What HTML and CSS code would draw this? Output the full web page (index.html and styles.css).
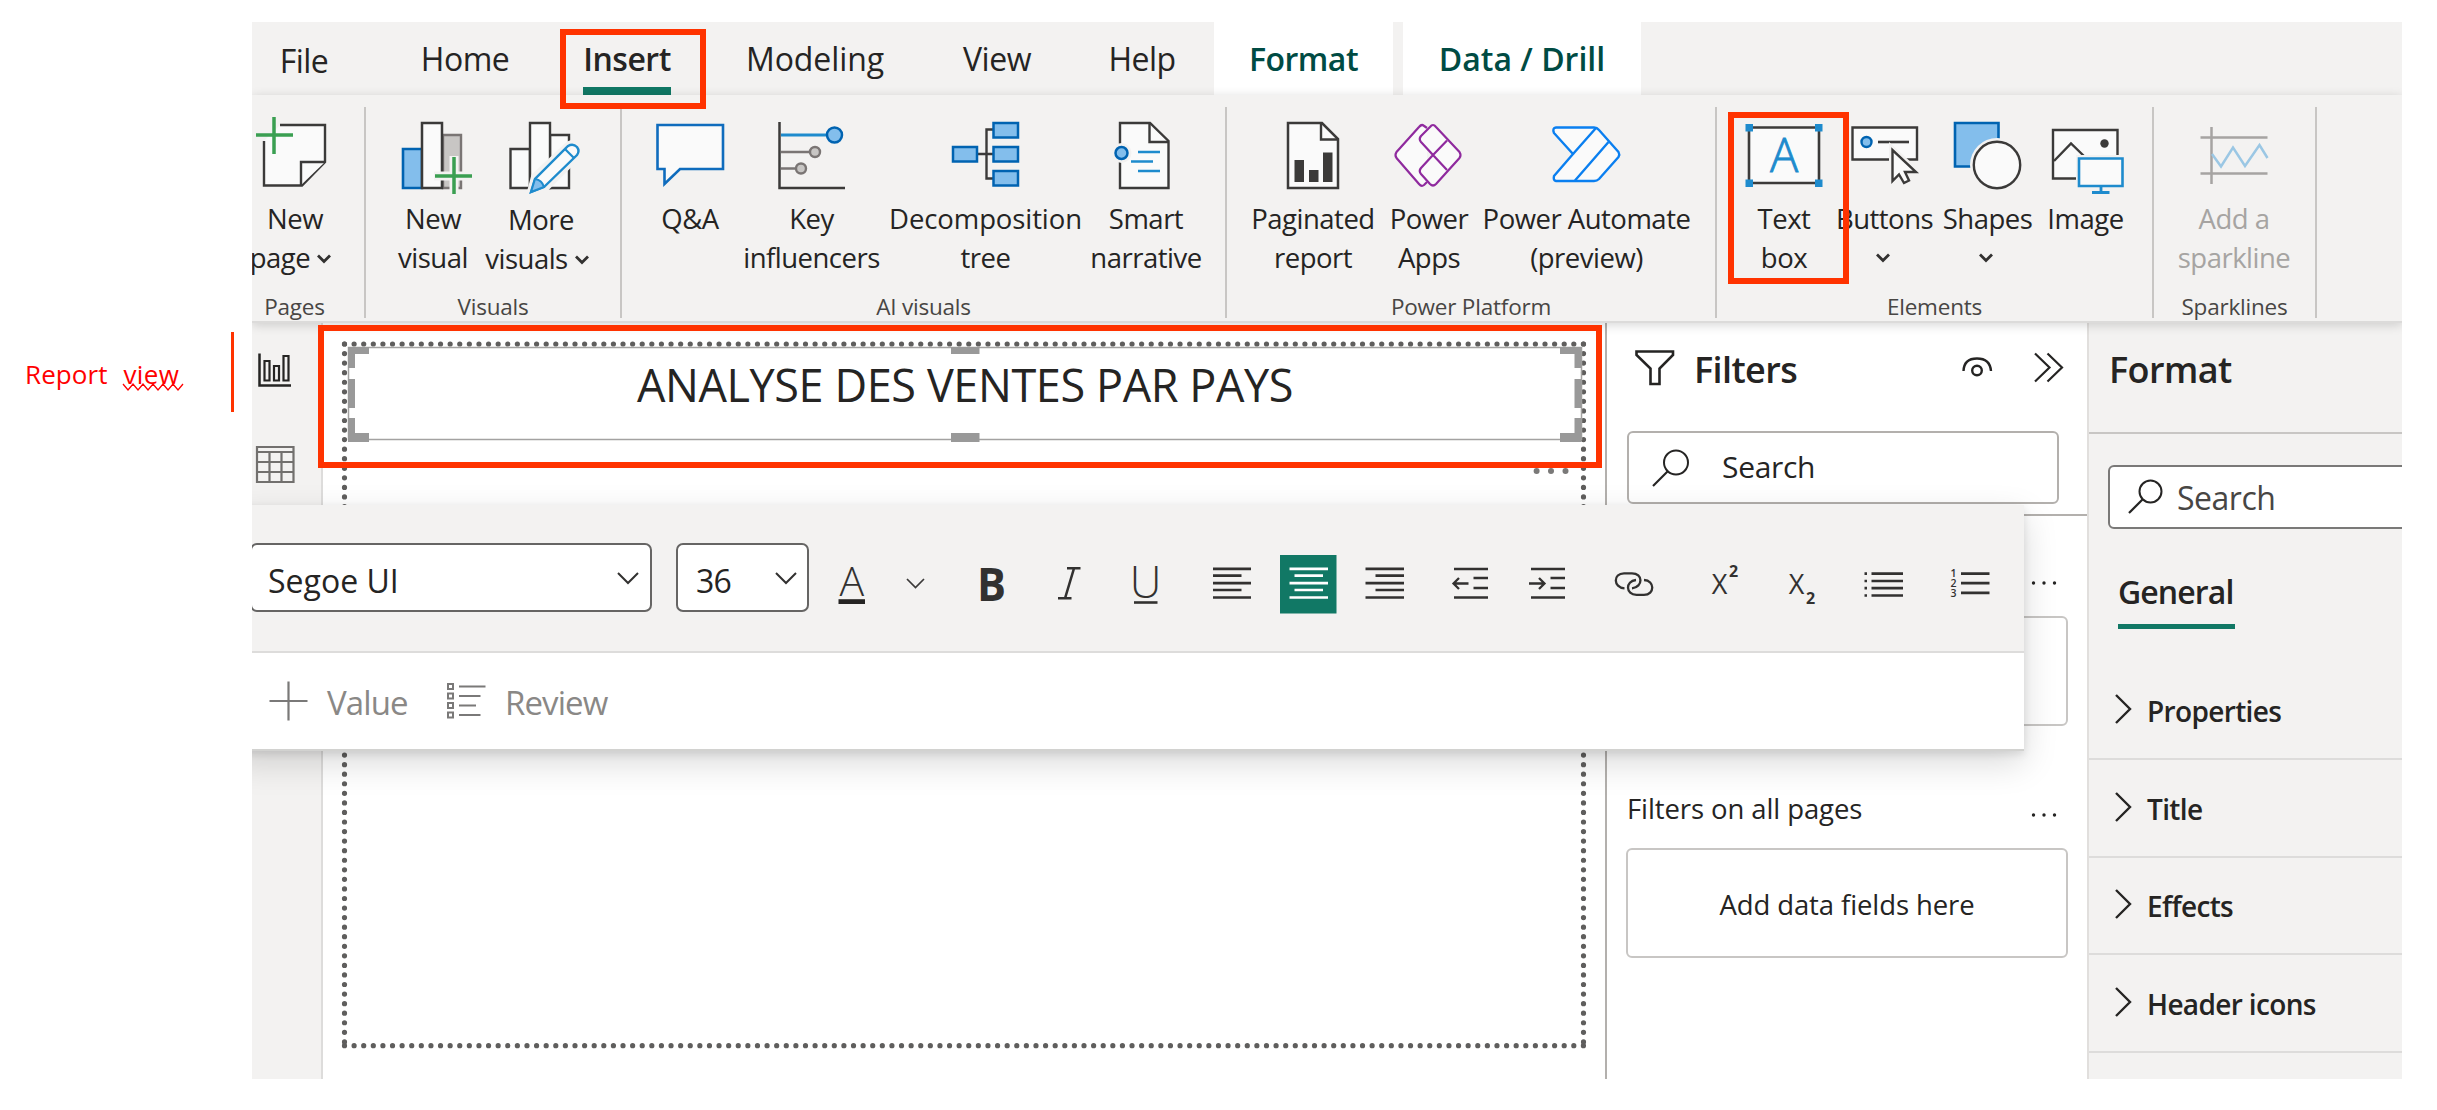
FILE: index.html
```html
<!DOCTYPE html>
<html lang="en">
<head>
<meta charset="utf-8">
<title>Report editor</title>
<link rel="stylesheet" href="styles.css">
</head>
<body>
<div class="page">
<aside class="note">
  <span class="note-text">Report&nbsp; <span class="note-word">view</span></span>
  <svg class="squiggle" width="62" height="8" viewBox="0 0 62 8"><path d="M1 1l5 6 5-6 5 6 5-6 5 6 5-6 5 6 5-6 5 6 5-6 5 6 5-6" fill="none" stroke="#f00" stroke-width="1.300"/></svg>
  <span class="note-bar"></span>
</aside>

<div class="app">
  <nav class="tabs">
    <span class="tab t-file">File</span>
    <span class="tab t-home">Home</span>
    <span class="tab t-insert">Insert</span>
    <span class="tab t-model">Modeling</span>
    <span class="tab t-view">View</span>
    <span class="tab t-help">Help</span>
    <span class="ctx c-format">Format</span>
    <span class="ctx c-drill">Data / Drill</span>
  </nav>

  <section class="ribbon">
    <div class="group g-pages">
      <div class="items">
        <div class="item"><svg width="86" height="84" viewBox="252 114 86 84"><path d="M280 125H325V162L302 185.500H264V141" fill="#fafafa" stroke="#3b3a39" stroke-width="2.400"/><path d="M301 185V162H325" fill="#fafafa" stroke="#3b3a39" stroke-width="2.400"/><path d="M256 135H293M274 117V154" stroke="#3a9f51" stroke-width="3.500"/></svg>
        <span>New</span><span class="pg">page<svg class="chev" width="14" height="10" viewBox="0 0 14 10"><path d="M1 1.500l6 6 6-6"/></svg></span></div>
      </div>
      <div class="label">Pages</div>
    </div>
    <div class="group g-visuals">
      <div class="items">
        <div class="item"><svg width="98" height="84" viewBox="384 114 98 84"><path d="M403 149H422V188H403Z" fill="#83beec" stroke="#0063b1" stroke-width="2.600"/><path d="M443 135H461V188H443Z" fill="#c8c6c4" stroke="#7a7574" stroke-width="2.400"/><path d="M422 123H442V188H422Z" fill="#fafafa" stroke="#3b3a39" stroke-width="2.500"/><path d="M434 176H474M454 156V196" stroke="#f3f2f1" stroke-width="9"/><path d="M435 176H472M454 157V194" stroke="#3a9f51" stroke-width="3.500"/></svg>
        <span>New</span><span>visual</span></div>
        <div class="item"><svg width="114" height="84" viewBox="483 114 114 84"><g fill="#fafafa" stroke="#3b3a39" stroke-width="2.400"><path d="M551 135H570V188H551Z"/><path d="M511.500 149H531V188H511.500Z"/><path d="M531 123H551V188H531Z"/></g><path d="M532 192L536 177 570 145Q576 142 579 147 582 152 578 156L546 188Z" fill="#fafafa" stroke="#f3f2f1" stroke-width="8"/><path d="M532 192L536 179 569 146Q574 143 578 147 581 151 578 155L545 187Z" fill="#fafafa" stroke="#1e8bcd" stroke-width="2.400"/><path d="M532 192L536 179Q543 180 545 187Z" fill="#83beec" stroke="#1e8bcd" stroke-width="2"/><path d="M566 149L575 158" stroke="#1e8bcd" stroke-width="2.200"/></svg>
        <span class="mo">More</span><span class="mv">visuals<svg class="chev" width="14" height="10" viewBox="0 0 14 10"><path d="M1 1.500l6 6 6-6"/></svg></span></div>
      </div>
      <div class="label">Visuals</div>
    </div>
    <div class="group g-ai">
      <div class="items">
        <div class="item"><svg width="108" height="84" viewBox="636 114 108 84"><path d="M657.500 125H723V169H680L664.500 184V169H657.500Z" fill="#fafafa" stroke="#0f6cbd" stroke-width="2.600"/></svg>
        <span>Q&amp;A</span></div>
        <div class="item"><svg width="135" height="84" viewBox="744 114 135 84"><path d="M779.500 122V188H845" fill="none" stroke="#3b3a39" stroke-width="2.500"/><path d="M781 135H827" stroke="#1e8bcd" stroke-width="2.800"/><path d="M781 152H810M781 168.500H796" stroke="#7a7574" stroke-width="2.500"/><circle cx="834.500" cy="135" r="7.500" fill="#83beec" stroke="#0063b1" stroke-width="2.500"/><circle cx="815" cy="152" r="5" fill="#c8c6c4" stroke="#7a7574" stroke-width="2.400"/><circle cx="801" cy="168.500" r="5" fill="#c8c6c4" stroke="#7a7574" stroke-width="2.400"/></svg>
        <span>Key</span><span>influencers</span></div>
        <div class="item"><svg width="213" height="84" viewBox="879 114 213 84"><path d="M977 154H993M993 129.500H986.500V178.500H993" fill="none" stroke="#3b3a39" stroke-width="2.400"/><g fill="#83beec" stroke="#0063b1" stroke-width="2.500"><path d="M953 147H977V161.500H953Z"/><path d="M993.500 123H1018V137.500H993.500Z"/><path d="M993.500 147H1018V161.500H993.500Z"/><path d="M993.500 171H1018V185.500H993.500Z"/></g></svg>
        <span class="wide">Decomposition</span><span>tree</span></div>
        <div class="item"><svg width="108" height="84" viewBox="1092 114 108 84"><path d="M1120 123H1150L1168.500 141V188H1120Z" fill="#fafafa" stroke="#3b3a39" stroke-width="2.400"/><path d="M1149.500 123V142H1168" fill="none" stroke="#3b3a39" stroke-width="2.400"/><circle cx="1121.500" cy="153" r="10" fill="#f3f2f1"/><circle cx="1121.500" cy="153" r="6" fill="#83beec" stroke="#0063b1" stroke-width="2.500"/><path d="M1138 152H1160M1131 161.500H1153M1138 171H1160" stroke="#1e8bcd" stroke-width="2.600"/></svg>
        <span>Smart</span><span>narrative</span></div>
      </div>
      <div class="label">AI visuals</div>
    </div>
    <div class="group g-power">
      <div class="items">
        <div class="item"><svg width="130" height="84" viewBox="1248 114 130 84"><path d="M1288 123H1322L1338 139V188H1288Z" fill="#fafafa" stroke="#3b3a39" stroke-width="2.500"/><path d="M1321 123V139.500H1338" fill="none" stroke="#3b3a39" stroke-width="2.400"/><path d="M1294.500 160H1304V182H1294.500ZM1309 170H1318.500V182H1309ZM1323 152.500H1332.500V182H1323Z" fill="#3b3a39"/></svg>
        <span>Paginated</span><span>report</span></div>
        <div class="item"><svg width="102" height="84" viewBox="1378 114 102 84"><g fill="#fafafa" stroke="#8f2a9e" stroke-width="2.200" stroke-linejoin="round"><path d="M1427 128L1423.500 125.500Q1421.500 124 1419 127L1396.500 152Q1394.500 155 1396.500 158L1419 184Q1421.500 187 1424 185L1427 182"/><path d="M1430 127Q1433 123 1436 127L1459.500 152Q1461.500 155 1459.500 158L1436 184Q1433 187 1430 184L1421 174Q1418.500 171 1421 168L1433 155 1421 142Q1418.500 139 1421 136Z"/><path d="M1433 155L1447 140.500M1433 155L1447 170" /></g></svg>
        <span>Power</span><span>Apps</span></div>
        <div class="item"><svg width="213" height="84" viewBox="1480 114 213 84"><g fill="#fafafa" stroke="#0a7ff0" stroke-width="2.400" stroke-linejoin="round"><path d="M1556 127.500H1594Q1597 127.500 1599 130L1618.500 152Q1620 154.500 1618.500 157L1599 179Q1597 181 1594 181H1556Q1553 180.500 1554 176L1573 154 1554 133Q1552 128 1556 127.500Z"/><path d="M1573 154L1596 128M1575 180.500L1608.500 142" fill="none"/></g></svg>
        <span>Power Automate</span><span>(preview)</span></div>
      </div>
      <div class="label">Power Platform</div>
    </div>
    <div class="group g-elements">
      <div class="items">
        <div class="item"><svg width="98" height="84" viewBox="1735 114 98 84"><path d="M1749 127.500H1819V183H1749Z" fill="#fafafa" stroke="#3b3a39" stroke-width="2.600"/><path d="M1745.500 124H1753V131.500H1745.500ZM1815 124H1822.500V131.500H1815ZM1745.500 179.500H1753V187H1745.500ZM1815 179.500H1822.500V187H1815Z" fill="#1e8bcd"/><text x="1784" y="172" text-anchor="middle" class="glyph-a" fill="#1e8bcd">A</text></svg>
        <span>Text</span><span>box</span></div>
        <div class="item"><svg width="103" height="84" viewBox="1833 114 103 84"><path d="M1852.500 127.500H1917V159.500H1852.500Z" fill="#fafafa" stroke="#3b3a39" stroke-width="2.400"/><circle cx="1866.500" cy="142" r="5" fill="#83beec" stroke="#0063b1" stroke-width="2.400"/><path d="M1878 142H1909" stroke="#3b3a39" stroke-width="2.600"/><path d="M1892.500 150V181L1899 174.500 1904 183 1909 180.500 1905 172.500H1917Z" fill="#fafafa" stroke="#f3f2f1" stroke-width="7"/><path d="M1892.500 150V181L1899 174.500 1904 183 1909 180.500 1905 172H1916Z" fill="#fafafa" stroke="#3b3a39" stroke-width="2.400"/></svg>
        <span>Buttons</span><span><svg class="chev solo" width="14" height="10" viewBox="0 0 14 10"><path d="M1 1.500l6 6 6-6"/></svg></span></div>
        <div class="item"><svg width="103" height="84" viewBox="1936 114 103 84"><path d="M1955 123H1998.500V166.500H1955Z" fill="#83beec" stroke="#0063b1" stroke-width="2.600"/><circle cx="1997" cy="165" r="27" fill="#f3f2f1"/><circle cx="1997" cy="165" r="23.200" fill="#fafafa" stroke="#3b3a39" stroke-width="2.400"/></svg>
        <span>Shapes</span><span><svg class="chev solo" width="14" height="10" viewBox="0 0 14 10"><path d="M1 1.500l6 6 6-6"/></svg></span></div>
        <div class="item"><svg width="93" height="84" viewBox="2039 114 93 84"><path d="M2053 130H2117.500V178.500H2053Z" fill="#fafafa" stroke="#3b3a39" stroke-width="2.400"/><path d="M2054 161L2071 143.500 2086 158" fill="none" stroke="#3b3a39" stroke-width="2.400"/><circle cx="2104.500" cy="143.500" r="4.200" fill="#3b3a39"/><path d="M2076 155H2128V190H2076Z" fill="#f3f2f1"/><path d="M2079 158.500H2122.500V186H2079Z" fill="#fafafa" stroke="#1e8bcd" stroke-width="2.600"/><path d="M2101 186V192M2092 192.500H2109.500" stroke="#1e8bcd" stroke-width="2.800"/></svg>
        <span>Image</span></div>
      </div>
      <div class="label">Elements</div>
    </div>
    <div class="group g-spark">
      <div class="items">
        <div class="item off"><svg width="148" height="84" viewBox="2160 114 148 84"><path d="M2200.500 137.500H2267.500M2200.500 173.500H2267.500M2211.500 127V184" stroke="#a6a4a2" stroke-width="2.500"/><path d="M2212 154L2221 166.500 2233 147.500 2245 166 2259.500 145 2267.500 158" fill="none" stroke="#9bc7e4" stroke-width="2.500"/></svg>
        <span>Add a</span><span>sparkline</span></div>
      </div>
      <div class="label">Sparklines</div>
    </div>
  </section>

  <main class="work">
    <div class="rail">
      <svg width="40" height="40" viewBox="254 351 40 40"><path d="M259.500 353.500V385.500H291" fill="none" stroke="#252423" stroke-width="2.500"/><path d="M264.500 361H269.500V380.500H264.500ZM274 366H279V380.500H274ZM283.500 356H288.500V380.500H283.500Z" fill="none" stroke="#252423" stroke-width="2.200"/></svg>
      <svg class="table-icon" width="42" height="42" viewBox="254 444 42 42"><path d="M257 447H293.500V482H257ZM257 452H293.500M257 462H293.500M257 472H293.500M269.500 452V482M281.500 452V482" fill="none" stroke="#72706e" stroke-width="2.200"/></svg>
    </div>
    <div class="canvas">
      <div class="sheet">
        <svg class="dots" width="1246" height="709" viewBox="341 340 1246 709"><g fill="none" stroke="#5f5e5d" stroke-width="5.200" stroke-linecap="round"><path d="M344.500 344H1583.500" stroke-dasharray="0 9.604"/><path d="M344.500 1045.700H1583.500" stroke-dasharray="0 9.604"/><path d="M344.500 344V1045" stroke-dasharray="0 9.560"/><path d="M1583.500 344V1045" stroke-dasharray="0 9.560"/></g></svg>
        <div class="textbox">ANALYSE DES VENTES PAR PAYS
          <svg class="handles" width="1236" height="98" viewBox="347 346 1236 98"><path d="M348.500 347.500H1581.500V439.500H348.500Z" fill="none" stroke="#a3a2a1" stroke-width="1.500"/><path d="M348 347H369V354H355V368H348ZM348 379H355V408H348ZM348 418H355V433H369V442H348ZM951 347H979.500V354H951ZM951 433H979.500V442H951ZM1560 347H1581.500V368H1574.500V354H1560ZM1574.500 379H1581.500V408H1574.500ZM1574.500 418H1581.500V442H1560V433H1574.500Z" fill="#999"/></svg>
        </div>
        <svg class="more" width="36" height="8" viewBox="0 0 36 8"><g fill="#7a7978"><circle cx="3.600" cy="4" r="3"/><circle cx="18" cy="4" r="3"/><circle cx="32.500" cy="4" r="3"/></g></svg>
      </div>
    </div>
    <div class="filters">
      <div class="f-head">
        <svg width="44" height="40" viewBox="1633 349 44 40"><path d="M1636.500 352.500H1673V356L1659.500 369.500V385H1650.500V369.500L1636.500 356Z" fill="none" stroke="#252423" stroke-width="2.600"/></svg>
        <h2>Filters</h2>
        <svg class="eye" width="34" height="24" viewBox="1960 354 34 24"><path d="M1963.500 371Q1964 358.500 1977 358.500 1990 358.500 1991 371" fill="none" stroke="#252423" stroke-width="2.400"/><circle cx="1977" cy="370.500" r="4.800" fill="none" stroke="#252423" stroke-width="2.400"/></svg>
        <svg class="dbl" width="32" height="32" viewBox="2033 353 32 32"><path d="M2035 354.500L2049.500 368.500 2035 382.500M2047.500 354.500L2062 368.500 2047.500 382.500" fill="none" stroke="#252423" stroke-width="2.200"/></svg>
      </div>
      <div class="search f-search"><svg width="40" height="40" viewBox="1650 447 40 40"><circle cx="1676" cy="461.500" r="12" fill="none" stroke="#252423" stroke-width="2"/><path d="M1667.500 470.500L1653 485" stroke="#252423" stroke-width="2.200"/></svg><span>Search</span></div>
      <div class="f-rule"></div>
      <div class="f-row first"><span></span><svg width="26" height="6" viewBox="0 0 26 6"><g fill="#252423"><circle cx="2.500" cy="3" r="1.700"/><circle cx="13" cy="3" r="1.700"/><circle cx="23.500" cy="3" r="1.700"/></g></svg></div>
      <div class="drop"></div>
      <div class="f-row second"><span>Filters on all pages</span><svg width="26" height="6" viewBox="0 0 26 6"><g fill="#252423"><circle cx="2.500" cy="3" r="1.700"/><circle cx="13" cy="3" r="1.700"/><circle cx="23.500" cy="3" r="1.700"/></g></svg></div>
      <div class="drop">Add data fields here</div>
    </div>
    <div class="format">
      <div class="p-head"><h2>Format</h2></div>
      <div class="search p-search"><svg width="38" height="38" viewBox="2126 477 38 38"><circle cx="2149.500" cy="490.500" r="11" fill="none" stroke="#252423" stroke-width="2"/><path d="M2141.500 498.500L2128 512" stroke="#252423" stroke-width="2.200"/></svg><span>Search</span></div>
      <div class="p-tab"><span>General</span></div>
      <div class="card"><svg width="20" height="32" viewBox="0 0 20 32"><path d="M2 2l14 14-14 14"/></svg><span>Properties</span></div>
      <div class="card"><svg width="20" height="32" viewBox="0 0 20 32"><path d="M2 2l14 14-14 14"/></svg><span>Title</span></div>
      <div class="card"><svg width="20" height="32" viewBox="0 0 20 32"><path d="M2 2l14 14-14 14"/></svg><span>Effects</span></div>
      <div class="card"><svg width="20" height="32" viewBox="0 0 20 32"><path d="M2 2l14 14-14 14"/></svg><span>Header icons</span></div>
    </div>
  </main>

  <div class="bar">
    <div class="bar-top">
      <div class="select s-font"><span>Segoe UI</span><svg width="22" height="14" viewBox="0 0 22 14"><path d="M1 2l10 10 10-10"/></svg></div>
      <div class="select s-size"><span>36</span><svg width="22" height="14" viewBox="0 0 22 14"><path d="M1 2l10 10 10-10"/></svg></div>
      <svg width="55" height="76" viewBox="825 546 55 76"><text x="851.700" y="596" text-anchor="middle" class="glyph-fa">A</text><path d="M838.500 599.200H865V604H838.500Z" fill="#252423"/></svg>
      <svg width="70" height="76" viewBox="880 546 70 76"><path d="M907 579L915.500 587.500 924 579" fill="none" stroke="#3b3a39" stroke-width="1.700"/></svg>
      <svg width="84" height="76" viewBox="950 546 84 76"><text x="991.500" y="600.500" text-anchor="middle" textLength="29" lengthAdjust="spacingAndGlyphs" class="glyph-b">B</text></svg>
      <svg width="71" height="76" viewBox="1034 546 71 76"><path d="M1067 568.300H1080.500M1058 598.300H1071.500M1074 568.300L1065 598.300" fill="none" stroke="#323130" stroke-width="2.500"/></svg>
      <svg width="81" height="76" viewBox="1105 546 81 76"><text x="1145.500" y="597.500" text-anchor="middle" class="glyph-u">U</text><path d="M1134 602.500H1157.500" stroke="#323130" stroke-width="2.600"/></svg>
      <svg width="94" height="76" viewBox="1186 546 94 76"><path class="ln" d="M1213 568.800H1251M1213 575.700H1241.500M1213 583.200H1251M1213 590H1241.500M1213 597.500H1251"/></svg>
      <svg class="on" width="57" height="76" viewBox="1280 546 57 76"><path d="M1280 555H1336.500V613.500H1280Z" fill="#117865"/><path class="ln" d="M1289.500 568.800H1328M1294.500 575.700H1323M1289.500 583.200H1328M1294.500 590H1323M1289.500 597.500H1328"/></svg>
      <svg width="93" height="76" viewBox="1337 546 93 76"><path class="ln" d="M1365.500 568.800H1404M1375.500 575.700H1404M1365.500 583.200H1404M1375.500 590H1404M1365.500 597.500H1404"/></svg>
      <svg width="78" height="76" viewBox="1430 546 78 76"><path class="ln" d="M1454 569H1488M1473.500 578H1488M1473.500 588H1488M1454 597.500H1488"/><path class="ar" d="M1468.500 583.500H1453.500M1459 578L1453.500 583.500 1459 589"/></svg>
      <svg width="82" height="76" viewBox="1508 546 82 76"><path class="ln" d="M1531 569H1565M1550.500 578H1565M1550.500 588H1565M1531 597.500H1565"/><path class="ar" d="M1529 583.500H1544.500M1539 578L1544.500 583.500 1539 589"/></svg>
      <svg width="90" height="76" viewBox="1590 546 90 76"><path class="ar" d="M1624.500 588.300C1613 587.500 1613 573.300 1624 573.300H1632C1643 573.300 1643.500 587 1632 588.300"/><path class="ar" d="M1644 580C1655 580.500 1655 594.800 1644 594.800H1636.500C1625.500 594.800 1625 581 1636 580"/></svg>
      <svg width="85" height="76" viewBox="1680 546 85 76"><text x="1719.500" y="594" text-anchor="middle" class="glyph-x">X</text><text x="1733.700" y="577.300" text-anchor="middle" class="glyph-2">2</text></svg>
      <svg width="75" height="76" viewBox="1765 546 75 76"><text x="1796.500" y="594" text-anchor="middle" class="glyph-x">X</text><text x="1810.500" y="603.800" text-anchor="middle" class="glyph-2">2</text></svg>
      <svg width="85" height="76" viewBox="1840 546 85 76"><path class="ln" d="M1871.500 573.700H1903M1871.500 581H1903M1871.500 588.200H1903M1871.500 595.500H1903M1864.500 573.700H1867M1864.500 581H1867M1864.500 588.200H1867M1864.500 595.500H1867"/></svg>
      <svg width="85" height="76" viewBox="1925 546 85 76"><path class="ln" d="M1961 573.700H1989.500M1961 583.200H1989.500M1961 592.800H1989.500"/><g class="glyph-n" text-anchor="middle"><text x="1953.500" y="577">1</text><text x="1953.500" y="587">2</text><text x="1953.500" y="596.500">3</text></g></svg>
    </div>
    <div class="bar-bottom">
      <svg width="40" height="40" viewBox="0 0 40 40"><path d="M.5 20H38.500M19.500 .5V39.500" stroke="#7a7978" stroke-width="2.200"/></svg>
      <span class="b-value">Value</span>
      <svg width="40" height="38" viewBox="446 681 40 38"><path d="M448 683H453V688H448ZM448 692.500H453V697.500H448ZM448 702H453V707H448ZM448 711.500H453V716.500H448Z" fill="none" stroke="#7a7978" stroke-width="2"/><path d="M459 685.500H485.500M459 695H480.500M459 704.500H476M459 714H480.500" stroke="#7a7978" stroke-width="2.200"/></svg>
      <span class="b-review">Review</span>
    </div>
  </div>
</div>

<div class="mark m-insert"></div>
<div class="mark m-textbox"></div>
<div class="mark m-title"></div>
</div>
</body>
</html>
```
FILE: styles.css
```css
* { box-sizing: border-box; }
body { margin: 0; background: #fff; }
.page {
  position: relative; display: flex; width: 2437px; height: 1110px; overflow: hidden;
  font-family: "Open Sans", "Noto Sans", sans-serif; color: #252423; background: #fff;
}
svg { display: block; flex: none; }
h2 { margin: 0; font-weight: 600; font-size: 36px; line-height: 50px; letter-spacing: -.6px; }

/* side note */
.note { position: relative; width: 252px; padding: 356px 0 0 25px; }
.note-text { display: block; font-size: 26px; line-height: 36px; color: #f00; white-space: nowrap; letter-spacing: .1px; }
.note-word { margin-left: 2px; letter-spacing: .4px; }
.squiggle { position: absolute; left: 122px; top: 383px; }
.note-bar { position: absolute; left: 231px; top: 332px; width: 3px; height: 80px; background: #f30; }

.app {
  position: relative; display: flex; flex-direction: column; width: 2150px; height: 1057px;
  margin-top: 22px; overflow: hidden; background: #f3f2f1;
}

/* tabs */
.tabs { display: flex; height: 73px; line-height: 73px; font-size: 32px; letter-spacing: -.5px; white-space: nowrap; }
.tab { display: flex; justify-content: center; }
.t-file { width: 50px; margin-left: 27px; padding-top: 2px; }
.t-home { width: 90px; margin-left: 91px; }
.t-insert { width: 88px; margin-left: 73px; font-weight: 600; letter-spacing: -.5px; border-bottom: 8px solid #117865; }
.t-model { width: 140px; margin-left: 74px; letter-spacing: -.1px; }
.t-view { width: 72px; margin-left: 76px; }
.t-help { width: 70px; margin-left: 74px; }
.ctx { background: #fff; color: #004b43; font-weight: 600; text-align: center; }
.c-format { width: 179px; margin-left: 37px; letter-spacing: -.5px; }
.c-drill { width: 238px; margin-left: 10px; letter-spacing: 0; }

/* ribbon */
.ribbon { position: relative; z-index: 2; display: flex; height: 228px; padding-top: 12px; background: #f3f2f1; border-bottom: 2px solid #dcdbda; box-shadow: 0 2px 10px rgba(0,0,0,.16); }
.group { display: flex; flex-direction: column; height: 211px; border-right: 2px solid #c8c6c4; }
.items { display: flex; flex: none; height: 184px; padding-top: 7px; }
.item { display: flex; flex-direction: column; align-items: center; font-size: 27.500px; letter-spacing: -.5px; }
.item > span { display: flex; align-items: center; height: 39px; line-height: 39px; white-space: nowrap; }
.item > svg + span { margin-top: 1px; }
.item > svg + .mo { margin: 2px 0 0 4px; }
.item .pg { margin-left: -9px; }
.item .mv { margin-left: -4px; }
.item .wide { letter-spacing: -.1px; }
.off { color: #a6a4a2; }
.chev { margin: 3px 0 0 7px; fill: none; stroke: #323130; stroke-width: 2.800; }
.chev.solo { margin: 1px 3px 0 0; }
.label { flex: none; height: 30px; margin-top: 1px; line-height: 30px; font-size: 22.500px; letter-spacing: -.2px; text-align: center; color: #484644; white-space: nowrap; }
.g-pages { width: 141px; margin-left: -27px; }
.g-pages .items { padding-left: 27px; }
.g-pages .item { width: 86px; }
.g-visuals { width: 256px; }
.g-visuals .items { padding-left: 18px; }
.g-visuals .item:nth-child(1) { width: 98px; }
.g-visuals .item:nth-child(2) { width: 114px; }
.g-ai { width: 605px; }
.g-ai .items { padding-left: 14px; }
.g-ai .item:nth-child(1) { width: 108px; }
.g-ai .item:nth-child(2) { width: 135px; }
.g-ai .item:nth-child(3) { width: 213px; }
.g-ai .item:nth-child(4) { width: 108px; }
.g-power { width: 490px; }
.g-power .items { padding-left: 21px; }
.g-power .item:nth-child(1) { width: 130px; }
.g-power .item:nth-child(2) { width: 102px; }
.g-power .item:nth-child(3) { width: 213px; }
.g-elements { width: 437px; }
.g-elements .items { padding-left: 18px; }
.g-elements .item:nth-child(1) { width: 98px; }
.g-elements .item:nth-child(2), .g-elements .item:nth-child(3) { width: 103px; }
.g-elements .item:nth-child(4) { width: 93px; }
.g-spark { width: 163px; }
.g-spark .items { padding-left: 6px; }
.g-spark .item { width: 148px; }
.glyph-a { font-size: 47px; font-weight: 300; letter-spacing: 0; stroke: #1e8bcd; stroke-width: .8px; }

/* work area */
.work { display: flex; flex: 1; }
.rail { width: 71px; padding: 28px 0 0 2px; border-right: 2px solid #dddcdb; }
.table-icon { margin-top: 53px; }
.canvas { width: 1284px; padding: 17px 0 0 18px; background: #fff; border-right: 2px solid #b3b0ad; }
.sheet { position: relative; width: 1246px; height: 709px; }
.dots, .handles { position: absolute; left: 0; top: 0; }
.textbox { position: absolute; left: 6px; top: 6px; width: 1236px; height: 98px; padding-top: 8px; font-size: 45px; line-height: 62px; letter-spacing: -.4px; text-align: center; white-space: nowrap; }
.more { position: absolute; left: 1192px; top: 127px; }

/* filters */
.filters { width: 482px; background: #fff; border-right: 2px solid #e1dfdd; }
.f-head { display: flex; align-items: center; height: 109px; padding: 0 0 19px 26px; }
.f-head h2 { width: 105px; margin: 3px 0 0 17px; }
.eye { margin-left: 161px; margin-top: -4px; }
.dbl { margin-left: 39px; }
.search { display: flex; align-items: center; background: #fff; border: 2px solid #b3b0ad; border-radius: 6px; }
.f-search { width: 432px; height: 73px; margin: -1px 0 0 20px; padding-left: 21px; font-size: 30px; letter-spacing: -.3px; line-height: 40px; }
.f-search span { margin: -2px 0 0 32px; }
.f-rule { height: 2px; margin-top: 10px; background: #b3b0ad; }
.f-row { display: flex; justify-content: space-between; align-items: center; margin: 0 30px 0 20px; font-size: 27.500px; letter-spacing: -.1px; line-height: 40px; white-space: nowrap; }
.first { height: 100px; padding-top: 34px; }
.second { height: 122px; padding-top: 44px; }
.second svg { margin-top: 11px; }
.drop { width: 442px; height: 110px; margin-left: 19px; border: 2px solid #c8c6c4; border-radius: 6px; font-size: 27.500px; letter-spacing: -.1px; line-height: 109px; text-align: center; }

/* format pane */
.format { flex: 1; overflow: hidden; background: #f3f2f1; }
.p-head { height: 111px; padding: 23px 0 0 20px; border-bottom: 2px solid #c8c6c4; }
.p-head h2 { line-height: 48px; }
.p-search { width: 340px; height: 64px; margin: 31px 0 0 19px; padding-left: 17px; border-color: #7a7978; font-size: 32px; letter-spacing: -.5px; line-height: 44px; color: #484644; }
.p-search span { margin: 2px 0 0 12px; }
.p-tab { display: flex; height: 133px; padding: 40px 0 0 29px; font-size: 32px; font-weight: 600; letter-spacing: -.9px; line-height: 46px; }
.p-tab span { width: 117px; height: 60px; border-bottom: 5px solid #117865; }
.card { display: flex; align-items: center; height: 97.800px; border-bottom: 2px solid #dddcdb; padding: 2px 0 0 25px; font-size: 28px; font-weight: 600; letter-spacing: -.65px; white-space: nowrap; }
.card svg { margin-right: 13px; margin-top: -4px; fill: none; stroke: #252423; stroke-width: 2.400; }

/* floating text toolbar */
.bar { position: absolute; z-index: 3; left: -20px; top: 482.500px; width: 1792px; height: 246px; background: #fff; border-bottom: 2px solid #d2d2d0; box-shadow: 0 12px 32px rgba(0,0,0,.15), 0 3px 8px rgba(0,0,0,.1); }
.bar-top { display: flex; align-items: center; height: 148px; padding-left: 20px; background: #f3f2f1; border-bottom: 2px solid #dddcdb; }
.select { display: flex; align-items: center; justify-content: space-between; height: 69px; padding: 6px 11px 0 18px; border: 2px solid #666564; border-radius: 7px; background: #fff; font-size: 32px; letter-spacing: 0; line-height: 44px; white-space: nowrap; }
.select svg { margin-top: -6px; fill: none; stroke: #323130; stroke-width: 2; }
.s-font { width: 402px; margin-left: -2px; margin-right: 24px; padding-left: 16px; }
.s-size { width: 133px; margin-right: 16px; padding-right: 10px; letter-spacing: -.8px; }
.bar-top > svg { margin-top: 12px; letter-spacing: 0; }
.bar-top text { fill: #323130; }
.ln { fill: none; stroke: #323130; stroke-width: 2.700; }
.on .ln { stroke: #fff; }
.ar { fill: none; stroke: #323130; stroke-width: 2.300; }
.glyph-fa { font-size: 41px; font-weight: 300; }
.glyph-b { font-size: 46px; font-weight: 700; }
.glyph-u { font-size: 44px; font-weight: 300; }
.glyph-x { font-size: 27px; font-weight: 400; }
.glyph-2 { font-size: 16px; font-weight: 700; }
.glyph-n { font-size: 10.500px; font-weight: 600; }
.bar-bottom { display: flex; align-items: center; height: 96px; padding-left: 37px; font-size: 33px; letter-spacing: -.9px; line-height: 46px; color: #8a8886; }
.b-value { width: 79px; margin: 5px 40px 0 18px; }
.b-review { margin: 5px 0 0 19px; }

/* highlight frames */
.mark { position: absolute; z-index: 5; border: 6px solid #f30; }
.m-insert { left: 560px; top: 29px; width: 146px; height: 80px; }
.m-textbox { left: 1728px; top: 112px; width: 121px; height: 172px; }
.m-title { left: 318px; top: 325px; width: 1284px; height: 143px; }
```
